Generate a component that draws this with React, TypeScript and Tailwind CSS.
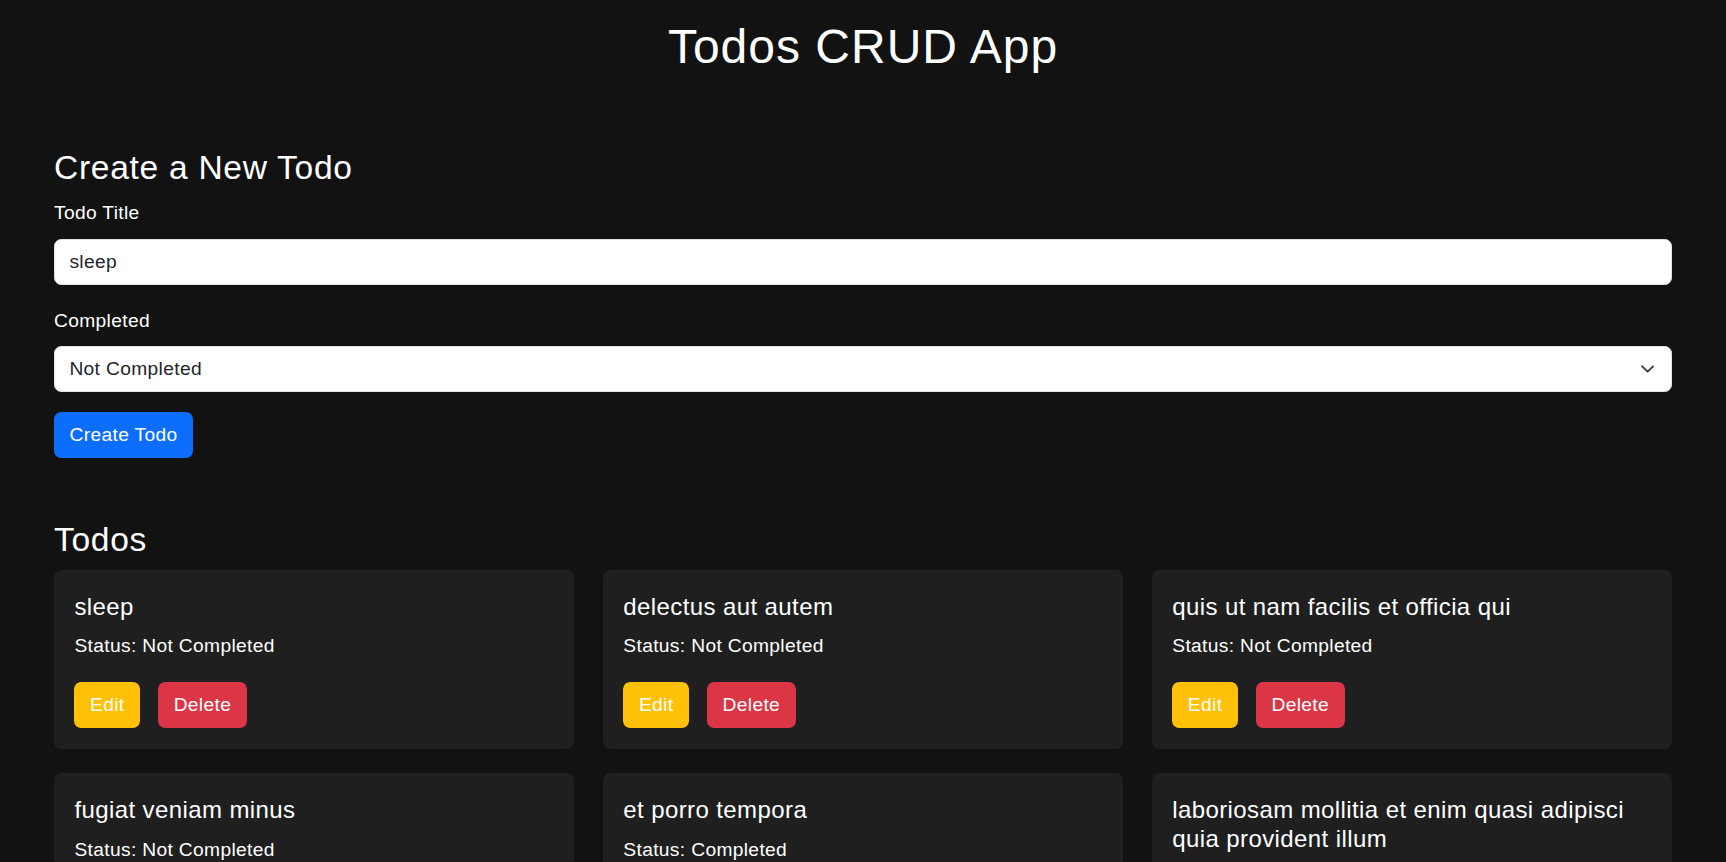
import React, { useState } from "react";

type Todo = { id: number; title: string; completed: boolean };

const todos: Todo[] = [
  { id: 1, title: "sleep", completed: false },
  { id: 2, title: "delectus aut autem", completed: false },
  { id: 3, title: "quis ut nam facilis et officia qui", completed: false },
  { id: 4, title: "fugiat veniam minus", completed: false },
  { id: 5, title: "et porro tempora", completed: true },
  { id: 6, title: "laboriosam mollitia et enim quasi adipisci quia provident illum", completed: false },
];

export default function App() {
  const [title, setTitle] = useState("sleep");
  const [status, setStatus] = useState("false");

  return (
    <div
      className="min-h-screen bg-[#121212] text-white px-[54px] pb-10 tracking-[0.35px]"
      style={{ fontFamily: '"Liberation Sans", Arial, sans-serif' }}
    >
      <h1 className="pt-[18px] text-center text-[48px] leading-[1.2] font-normal tracking-[1px]">Todos CRUD App</h1>

      <h2 className="mt-[72px] text-[33.6px] leading-[1.2] font-normal tracking-[0.7px]">Create a New Todo</h2>

      <label className="block mt-[11.5px] text-[19.2px] leading-[1.5]">Todo Title</label>
      <input
        className="mt-[10.5px] block w-full h-[46px] rounded-[7.2px] border-[1.2px] border-[#dee2e6] bg-white px-[14.4px] text-[19.2px] text-[#212529] outline-none tracking-[0.35px]"
        value={title}
        onChange={(e) => setTitle(e.target.value)}
      />

      <label className="block mt-[22px] text-[19.2px] leading-[1.5]">Completed</label>
      <div className="relative mt-[10.7px]">
        <select
          className="block w-full h-[46px] appearance-none rounded-[7.2px] border-[1.2px] border-[#dee2e6] bg-white px-[14.4px] text-[19.2px] text-[#212529] outline-none tracking-[0.35px]"
          value={status}
          onChange={(e) => setStatus(e.target.value)}
        >
          <option value="false">Not Completed</option>
          <option value="true">Completed</option>
        </select>
        <svg
          className="pointer-events-none absolute right-[14.4px] top-1/2 -translate-y-1/2"
          width="19.2"
          height="14.4"
          viewBox="0 0 16 16"
        >
          <path d="M2 5l6 6 6-6" fill="none" stroke="#343a40" strokeWidth="2" strokeLinecap="round" strokeLinejoin="round" />
        </svg>
      </div>

      <button className="mt-[20px] h-[46px] rounded-[7.2px] bg-[#0d6efd] px-[15.6px] text-[19.2px] text-white tracking-[0.35px]">
        Create Todo
      </button>

      <h2 className="mt-[61.5px] text-[33.6px] leading-[1.2] font-normal tracking-[0.7px]">Todos</h2>

      <div className="mt-[10.3px] grid grid-cols-3 gap-x-[28.8px] gap-y-[24.6px]">
        {todos.map((t) => (
          <div key={t.id} className="rounded-[7.2px] bg-[#1f1f1f] px-[20.4px] pt-[22.6px] pb-[20.4px]">
            <h5 className="text-[24px] leading-[1.2] font-normal tracking-[0.4px]">{t.title}</h5>
            <p className="mt-[10.8px] text-[19.2px] leading-[1.5]">
              Status: {t.completed ? "Completed" : "Not Completed"}
            </p>
            <div className="mt-[21.2px] flex gap-[18px]">
              <button className="h-[46px] rounded-[7.2px] bg-[#ffc107] px-[15.6px] text-[19.2px] text-white tracking-[0.35px]">Edit</button>
              <button className="h-[46px] rounded-[7.2px] bg-[#dc3545] px-[15.6px] text-[19.2px] text-white tracking-[0.35px]">Delete</button>
            </div>
          </div>
        ))}
      </div>
    </div>
  );
}
